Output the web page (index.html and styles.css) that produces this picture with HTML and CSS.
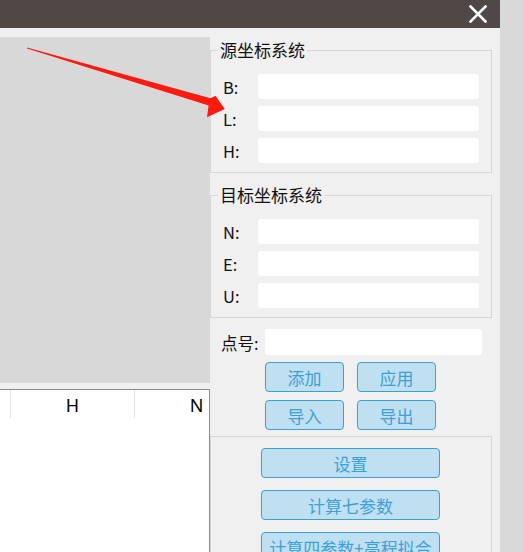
FILE: index.html
```html
<!DOCTYPE html>
<html lang="zh-CN">
<head>
<meta charset="utf-8">
<title>坐标转换</title>
<link rel="stylesheet" href="styles.css">
</head>
<body>
<div class="window">
  <header class="titlebar">
    <svg class="close" width="18" height="18" viewBox="0 0 18 18"><path d="M1.5 1.5 L16.5 16.5 M16.5 1.5 L1.5 16.5" stroke="#ffffff" stroke-width="2.6" stroke-linecap="square"/></svg>
  </header>
  <div class="main">
    <div class="left">
      <div class="canvas"></div>
      <div class="grid">
        <div class="grid-head">
          <div class="hcell hcell-first"></div>
          <div class="hcell">H</div>
          <div class="hcell">N</div>
        </div>
      </div>
    </div>
    <div class="right">
      <fieldset class="group group-src">
        <legend>源坐标系统</legend>
        <div class="fields">
          <label class="lbl">B:</label><input class="inp" type="text">
          <label class="lbl">L:</label><input class="inp" type="text">
          <label class="lbl">H:</label><input class="inp" type="text">
        </div>
      </fieldset>
      <fieldset class="group group-dst">
        <legend>目标坐标系统</legend>
        <div class="fields">
          <label class="lbl">N:</label><input class="inp" type="text">
          <label class="lbl">E:</label><input class="inp" type="text">
          <label class="lbl">U:</label><input class="inp" type="text">
        </div>
      </fieldset>
      <div class="point-row">
        <label class="lbl">点号:</label><input class="inp inp-point" type="text">
      </div>
      <div class="btn-grid">
        <button class="btn btn-small">添加</button>
        <button class="btn btn-small">应用</button>
        <button class="btn btn-small">导入</button>
        <button class="btn btn-small">导出</button>
      </div>
      <div class="group3">
        <button class="btn btn-wide">设置</button>
        <button class="btn btn-wide">计算七参数</button>
        <button class="btn btn-wide">计算四参数+高程拟合</button>
      </div>
    </div>
  </div>
  <svg class="arrow" width="240" height="130" viewBox="0 0 240 130">
    <polygon points="27,47.4 210.5,98.3 215.5,95.8 224.8,109 207,117.3 208.6,105.6 27,48.6" fill="#ff1a0f"/>
  </svg>
</div>
</body>
</html>
```

FILE: styles.css
```css
* { box-sizing: border-box; }

html, body {
  margin: 0;
  padding: 0;
}

body {
  background: #d9d9d9;
  font-family: "Noto Sans CJK SC", "Noto Sans", sans-serif;
  color: #111111;
}

.window {
  position: relative;
  width: 500px;
  height: 552px;
  background: #f0f0f0;
  overflow: hidden;
}

.titlebar {
  height: 28px;
  background: #504846;
  display: flex;
  justify-content: flex-end;
  align-items: center;
  padding-right: 13px;
}

.close { display: block; }

.main {
  display: flex;
  align-items: flex-start;
}

.left {
  width: 210px;
  flex: none;
  padding-top: 9px;
}

.canvas {
  height: 346px;
  background: #d8d8d8;
}

.grid {
  margin-top: 6px;
  height: 200px;
  background: #ffffff;
  border-top: 1px solid #8a8a8a;
  border-right: 1px solid #8a8a8a;
  overflow: hidden;
}

.grid-head {
  display: grid;
  grid-template-columns: 11px 124px 124px;
  height: 28px;
}

.hcell {
  border-right: 1px solid #e2e2e2;
  display: flex;
  align-items: center;
  justify-content: center;
  font-family: "Noto Sans", sans-serif;
  font-size: 18px;
  color: #000;
  line-height: 1;
  padding-top: 1px;
}

.right {
  width: 290px;
  flex: none;
}

.group {
  margin: 0;
  width: 282px;
  border: 1px solid #d6d6d6;
  padding: 14px 11px 9px 12px;
  min-inline-size: 0;
}

.group-src { margin-top: 12px; }
.group-dst { margin-top: 12px; }

.group legend {
  font-size: 17px;
  line-height: 20px;
  padding: 0 2px;
  margin-left: -5px;
  color: #111;
}

.fields {
  display: grid;
  grid-template-columns: 35px 221px;
  row-gap: 7px;
  align-items: center;
}

.lbl {
  font-size: 16.5px;
  line-height: 20px;
  padding-top: 1px;
  color: #111;
}

.inp {
  display: block;
  height: 25px;
  border: 0;
  border-radius: 3px;
  background: #ffffff;
  padding: 0 4px;
  margin: 0;
  outline: none;
  width: 221px;
  font-family: inherit;
}

.point-row {
  margin-top: 11px;
  padding-left: 11px;
  display: grid;
  grid-template-columns: 44px 217px;
  align-items: center;
}

.inp-point { width: 217px; height: 26px; }

.btn-grid {
  margin-top: 7px;
  padding-left: 55px;
  display: grid;
  grid-template-columns: 79px 79px;
  column-gap: 13px;
  row-gap: 8px;
}

.btn {
  font-family: "Noto Sans CJK SC", sans-serif;
  font-size: 17px;
  line-height: 1;
  color: #3f9fd8;
  background: #bee0f1;
  border: 1px solid #3c9fd9;
  border-radius: 4px;
  padding: 0;
  margin: 0;
  height: 30px;
}

.group3 {
  margin-top: 6px;
  width: 282px;
  height: 200px;
  border: 1px solid #d6d6d6;
  padding: 11px 0 0 50px;
  display: flex;
  flex-direction: column;
  gap: 12px;
}

.btn-wide {
  width: 179px;
  flex: none;
}

.arrow {
  position: absolute;
  left: 0;
  top: 0;
  pointer-events: none;
}
```
